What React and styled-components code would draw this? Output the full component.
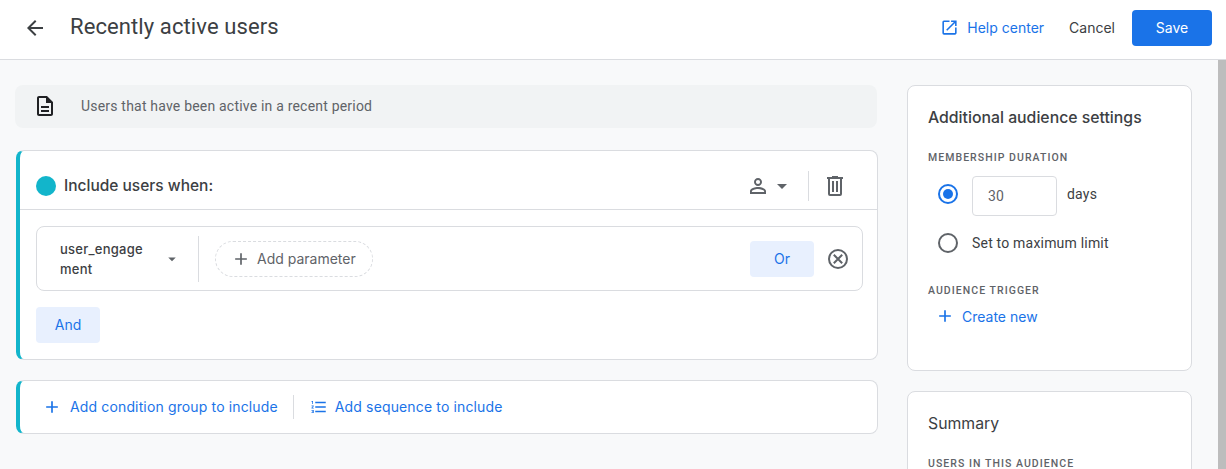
import React from 'react';
import styled, { createGlobalStyle } from 'styled-components';
import {
  MdArrowBack,
  MdOutlineDescription,
  MdOpenInNew,
  MdPersonOutline,
  MdArrowDropDown,
  MdAdd,
  MdFormatListNumbered,
} from 'react-icons/md';

const GlobalStyle = createGlobalStyle`
  html, body {
    margin: 0;
    height: 100%;
    overflow: hidden;
    background: #f8f9fa;
    font-family: Roboto, "Noto Sans", sans-serif;
  }
  * { box-sizing: border-box; }
`;

const Page = styled.div`
  width: 1226px;
  height: 469px;
  display: flex;
  flex-direction: column;
  overflow: hidden;
`;

const Header = styled.header`
  height: 60px;
  flex: none;
  display: flex;
  align-items: center;
  padding: 0 14px 4px 23px;
  background: #fff;
  border-bottom: 1px solid #dadce0;
`;

const BackIcon = styled(MdArrowBack)`
  font-size: 24px;
  color: #3c4043;
  margin-right: 23px;
`;

const Title = styled.h1`
  flex: 1;
  margin: 0;
  padding-bottom: 2px;
  font-size: 22px;
  font-weight: 400;
  letter-spacing: 0.1px;
  color: #3c4043;
`;

const HelpLink = styled.a`
  display: flex;
  align-items: center;
  gap: 8px;
  font: 400 14px Inter, sans-serif;
  color: #1a73e8;
  margin-right: 25px;
`;

const CancelLink = styled.span`
  font: 400 14px Inter, sans-serif;
  color: #3c4043;
  margin-right: 17px;
`;

const SaveButton = styled.button`
  width: 80px;
  height: 36px;
  border: 0;
  border-radius: 4px;
  background: #1a73e8;
  color: #fff;
  font: 400 14px Inter, sans-serif;
`;

const Body = styled.div`
  flex: 1;
  min-height: 0;
  display: flex;
`;

const Content = styled.main`
  flex: 1;
  display: flex;
  gap: 29px;
  padding: 25px 26px 0 15px;
  overflow: hidden;
`;

const Scrollbar = styled.div`
  width: 8px;
  flex: none;
  background: #bdbdbd;
`;

const LeftColumn = styled.div`
  width: 863px;
  flex: none;
  display: flex;
  flex-direction: column;
`;

const RightColumn = styled.aside`
  flex: 1;
  display: flex;
  flex-direction: column;
  gap: 20px;
`;

const InfoBar = styled.div`
  height: 43px;
  flex: none;
  display: flex;
  align-items: center;
  padding: 0 0 1px 18px;
  gap: 24px;
  margin: 0 1px 22px 0;
  background: #f1f3f4;
  border-radius: 8px;
  font-size: 14px;
  color: #5f6368;
  letter-spacing: 0.2px;
  svg { font-size: 24px; color: #202124; }
`;

const GroupCard = styled.section`
  margin-left: 1px;
  background: #fff;
  border: 1px solid #dadce0;
  border-left: 4px solid #12b5cb;
  border-radius: 8px;
`;

const GroupHeader = styled.div`
  height: 59px;
  display: flex;
  align-items: center;
  padding: 11px 30px 0 16px;
  border-bottom: 1px solid #dadce0;
`;

const Dot = styled.span`
  width: 20px;
  height: 20px;
  border-radius: 50%;
  background: #12b5cb;
  margin-right: 8px;
`;

const GroupTitle = styled.span`
  flex: 1;
  padding-bottom: 1px;
  font: 500 15.5px Inter, sans-serif;
  color: #3c4043;
`;

const ScopeMenu = styled.div`
  display: flex;
  align-items: center;
  color: #5f6368;
  padding-right: 14px;
  border-right: 1px solid #dadce0;
  height: 30px;
  margin-right: 14px;
`;

const GroupBody = styled.div`
  padding: 16px 14px 16px 16px;
`;

const ConditionRow = styled.div`
  height: 65px;
  display: flex;
  align-items: center;
  border: 1px solid #dadce0;
  border-radius: 8px;
  padding: 0 12px 0 23px;
`;

const EventName = styled.div`
  width: 87px;
  margin-right: 16px;
  font: 500 13px/20px Inter, sans-serif;
  letter-spacing: 0.25px;
  color: #3c4043;
  word-break: break-all;
`;

const RowDivider = styled.span`
  width: 1px;
  height: 46px;
  background: #dadce0;
  margin: 0 16px 0 17px;
`;

const ParameterChip = styled.div`
  width: 158px;
  height: 36px;
  display: flex;
  align-items: center;
  gap: 6px;
  padding-left: 15px;
  border: 1px dashed #dadce0;
  border-radius: 18px;
  font: 400 14px Inter, sans-serif;
  color: #5f6368;
  svg { font-size: 20px; }
`;

const Spacer = styled.span`
  flex: 1;
`;

const TonalButton = styled.button`
  width: 64px;
  height: 36px;
  border: 0;
  padding-bottom: 2px;
  border-radius: 4px;
  background: #e8f0fe;
  color: #1a73e8;
  font: 400 14px Inter, sans-serif;
`;

const AndRow = styled.div`
  margin-top: 16px;
`;

const AddCard = styled(GroupCard)`
  height: 54px;
  margin-top: 20px;
  display: flex;
  align-items: center;
  padding-left: 22px;
`;

const AddLink = styled.span`
  display: flex;
  align-items: center;
  gap: ${(p) => p.$gap || 8}px;
  font: 400 14px Inter, sans-serif;
  letter-spacing: 0.14px;
  color: #1a73e8;
  padding-bottom: 1px;
  svg { font-size: 20px; }
`;

const AddDivider = styled.span`
  width: 1px;
  height: 24px;
  background: #dadce0;
  margin: 0 16px 0 15px;
`;

const SideCard = styled.section`
  flex: none;
  background: #fff;
  border: 1px solid #dadce0;
  border-radius: 8px;
  padding: 22px 20px 0;
  height: ${(p) => p.$height}px;
`;

const SideTitle = styled.h2`
  margin: 0 0 24px;
  font: ${(p) => (p.$light ? 400 : 500)} 15.8px Inter, sans-serif;
  color: #3c4043;
`;

const Label = styled.div`
  font-size: 10.5px;
  font-weight: 500;
  letter-spacing: 1.05px;
  color: #5f6368;
  margin-top: ${(p) => p.$top || 0}px;
`;

const RadioRow = styled.div`
  display: flex;
  align-items: center;
  margin-left: 10px;
  margin-top: ${(p) => p.$top}px;
  font-size: 14px;
  letter-spacing: 0.2px;
  color: #3c4043;
`;

const Radio = styled.span`
  width: 20px;
  height: 20px;
  border-radius: 50%;
  border: 2px solid ${(p) => (p.$on ? '#1a73e8' : '#5f6368')};
  display: flex;
  align-items: center;
  justify-content: center;
  margin: 0 14px ${(p) => (p.$on ? 4 : 0)}px 0;
  &::after {
    content: '';
    width: 10px;
    height: 10px;
    border-radius: 50%;
    background: ${(p) => (p.$on ? '#1a73e8' : 'transparent')};
  }
`;

const DaysInput = styled.div`
  width: 85px;
  height: 40px;
  display: flex;
  align-items: center;
  padding-left: 15px;
  margin-right: 10px;
  border: 1px solid #dadce0;
  border-radius: 4px;
  font-size: 14px;
  color: #5f6368;
`;

const DaysUnit = styled.span`
  margin-bottom: 4px;
`;

const CreateLink = styled(AddLink)`
  margin: 9px 0 0 7px;
  letter-spacing: 0;
`;

const TrashIcon = () => (
  <svg width="24" height="24" viewBox="0 0 24 24" fill="#5f6368">
    <path d="M15 3V2H9v1H4v2h1v15a2 2 0 0 0 2 2h10a2 2 0 0 0 2-2V5h1V3h-5zm2 17H7V5h10v15z" />
    <path d="M9 7h2v11H9zM13 7h2v11h-2z" />
  </svg>
);

const ClearIcon = () => (
  <svg width="24" height="24" viewBox="0 0 24 24" fill="none" stroke="#5f6368" strokeWidth="2" style={{ marginLeft: 12 }}>
    <circle cx="12" cy="12" r="9" />
    <path d="M7.8 7.8l8.4 8.4M16.2 7.8l-8.4 8.4" />
  </svg>
);

export default function App() {
  return (
    <Page>
      <GlobalStyle />
      <Header>
        <BackIcon />
        <Title>Recently active users</Title>
        <HelpLink>
          <MdOpenInNew size={19} />
          Help center
        </HelpLink>
        <CancelLink>Cancel</CancelLink>
        <SaveButton>Save</SaveButton>
      </Header>
      <Body>
        <Content>
          <LeftColumn>
            <InfoBar>
              <MdOutlineDescription />
              Users that have been active in a recent period
            </InfoBar>
            <GroupCard>
              <GroupHeader>
                <Dot />
                <GroupTitle>Include users when:</GroupTitle>
                <ScopeMenu>
                  <MdPersonOutline size={24} />
                  <MdArrowDropDown size={24} />
                </ScopeMenu>
                <TrashIcon />
              </GroupHeader>
              <GroupBody>
                <ConditionRow>
                  <EventName>user_engagement</EventName>
                  <MdArrowDropDown size={18} color="#5f6368" />
                  <RowDivider />
                  <ParameterChip>
                    <MdAdd />
                    Add parameter
                  </ParameterChip>
                  <Spacer />
                  <TonalButton>Or</TonalButton>
                  <ClearIcon />
                </ConditionRow>
                <AndRow>
                  <TonalButton>And</TonalButton>
                </AndRow>
              </GroupBody>
            </GroupCard>
            <AddCard>
              <AddLink>
                <MdAdd />
                Add condition group to include
              </AddLink>
              <AddDivider />
              <AddLink $gap={7}>
                <MdFormatListNumbered size={18} />
                Add sequence to include
              </AddLink>
            </AddCard>
          </LeftColumn>
          <RightColumn>
            <SideCard $height={286}>
              <SideTitle>Additional audience settings</SideTitle>
              <Label>MEMBERSHIP DURATION</Label>
              <RadioRow $top={12}>
                <Radio $on />
                <DaysInput>30</DaysInput>
                <DaysUnit>days</DaysUnit>
              </RadioRow>
              <RadioRow $top={17}>
                <Radio />
                Set to maximum limit
              </RadioRow>
              <Label $top={31}>AUDIENCE TRIGGER</Label>
              <CreateLink $gap={7}>
                <MdAdd />
                Create new
              </CreateLink>
            </SideCard>
            <SideCard $height={200}>
              <SideTitle $light>Summary</SideTitle>
              <Label>USERS IN THIS AUDIENCE</Label>
            </SideCard>
          </RightColumn>
        </Content>
        <Scrollbar />
      </Body>
    </Page>
  );
}
